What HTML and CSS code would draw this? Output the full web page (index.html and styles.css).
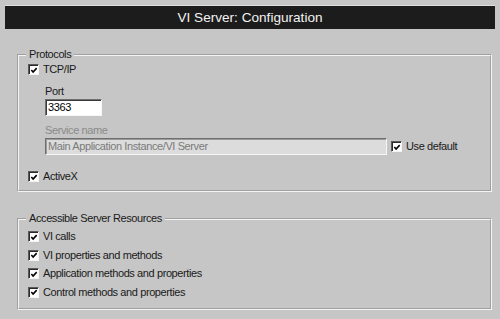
FILE: index.html
```html
<!DOCTYPE html>
<html>
<head>
<meta charset="utf-8">
<link rel="stylesheet" href="styles.css">
</head>
<body>
<div class="titlebar">VI Server: Configuration</div>
<fieldset class="group protocols">
  <legend>Protocols</legend>
  <div class="check"><span class="box"><svg viewBox="0 0 9 9" width="9" height="9"><path d="M1.5 4 L3.5 6.2 L7.5 1.8" fill="none" stroke="#000" stroke-width="1.8"/></svg></span>TCP/IP</div>
  <div class="indent">
    <div class="lbl port-lbl">Port</div>
    <div class="input port">3363</div>
    <div class="lbl disabled">Service name</div>
    <div class="svc-row">
      <div class="input svc">Main Application Instance/VI Server</div>
      <div class="check"><span class="box"><svg viewBox="0 0 9 9" width="9" height="9"><path d="M1.5 4 L3.5 6.2 L7.5 1.8" fill="none" stroke="#000" stroke-width="1.8"/></svg></span>Use default</div>
    </div>
  </div>
  <div class="check activex"><span class="box"><svg viewBox="0 0 9 9" width="9" height="9"><path d="M1.5 4 L3.5 6.2 L7.5 1.8" fill="none" stroke="#000" stroke-width="1.8"/></svg></span>ActiveX</div>
</fieldset>
<fieldset class="group resources">
  <legend>Accessible Server Resources</legend>
  <div class="check"><span class="box"><svg viewBox="0 0 9 9" width="9" height="9"><path d="M1.5 4 L3.5 6.2 L7.5 1.8" fill="none" stroke="#000" stroke-width="1.8"/></svg></span>VI calls</div>
  <div class="check"><span class="box"><svg viewBox="0 0 9 9" width="9" height="9"><path d="M1.5 4 L3.5 6.2 L7.5 1.8" fill="none" stroke="#000" stroke-width="1.8"/></svg></span>VI properties and methods</div>
  <div class="check"><span class="box"><svg viewBox="0 0 9 9" width="9" height="9"><path d="M1.5 4 L3.5 6.2 L7.5 1.8" fill="none" stroke="#000" stroke-width="1.8"/></svg></span>Application methods and properties</div>
  <div class="check"><span class="box"><svg viewBox="0 0 9 9" width="9" height="9"><path d="M1.5 4 L3.5 6.2 L7.5 1.8" fill="none" stroke="#000" stroke-width="1.8"/></svg></span>Control methods and properties</div>
</fieldset>
</body>
</html>
```
FILE: styles.css
```css
html, body {
  margin: 0;
  padding: 0;
  background: #c6c6c6;
  width: 500px;
  height: 319px;
  overflow: hidden;
}
body {
  font-family: "Liberation Sans", Arial, sans-serif;
  font-size: 11px;
  letter-spacing: -0.4px;
  color: #1a1a1a;
  padding-top: 5px;
  box-sizing: border-box;
}
.titlebar {
  margin: 0 5px;
  height: 23px;
  background: #1c1c1c;
  border-top: 1px solid #dedede;
  color: #f2f2f2;
  font-size: 13.6px;
  letter-spacing: 0;
  line-height: 23px;
  text-align: center;
}
.group {
  box-sizing: border-box;
  margin: 0 8px 0 17px;
  padding: 2px 0 0 9px;
  border: 2px groove #f4f4f4;
  min-width: 0;
}
.group legend {
  padding: 0 3px;
  margin-left: -2px;
  line-height: 13px;
  font-size: 11px;
}
.protocols {
  margin-top: 19px;
  height: 144px;
}
.resources {
  margin-top: 20px;
  height: 98px;
  padding-top: 5px;
}
.check {
  display: flex;
  align-items: center;
  height: 13px;
  line-height: 13px;
  white-space: nowrap;
}
.resources .check {
  margin-bottom: 5.5px;
}
.box {
  width: 11px;
  height: 11px;
  box-sizing: border-box;
  background: #fff;
  border: 1px solid;
  border-color: #5a5a5a #f4f4f4 #f4f4f4 #5a5a5a;
  box-shadow: inset 1px 1px 0 #2a2a2a;
  margin-right: 4px;
  display: flex;
  align-items: center;
  justify-content: center;
  flex: none;
}
.box svg {
  display: block;
  margin: 1px 0 0 1px;
}
.indent {
  padding-left: 17px;
}
.lbl {
  line-height: 13px;
}
.port-lbl {
  margin-top: 9px;
}
.disabled {
  color: #8a8a8a;
  margin-top: 8px;
}
.input {
  box-sizing: border-box;
  height: 17px;
  line-height: 14px;
  padding-left: 2px;
  border: 1px solid;
  border-color: #6e6e6e #f6f6f6 #f6f6f6 #6e6e6e;
  box-shadow: inset 1px 1px 0 #3a3a3a;
}
.port {
  width: 57px;
  margin-top: 1px;
  background: #fff;
  color: #000;
}
.svc-row {
  display: flex;
  align-items: center;
  margin-top: 1px;
}
.svc {
  width: 342px;
  background: #dcdcdc;
  color: #7a7a7a;
  box-shadow: inset 1px 1px 0 #9a9a9a;
  margin-right: 4px;
}
.activex {
  margin-top: 15px;
}
```
